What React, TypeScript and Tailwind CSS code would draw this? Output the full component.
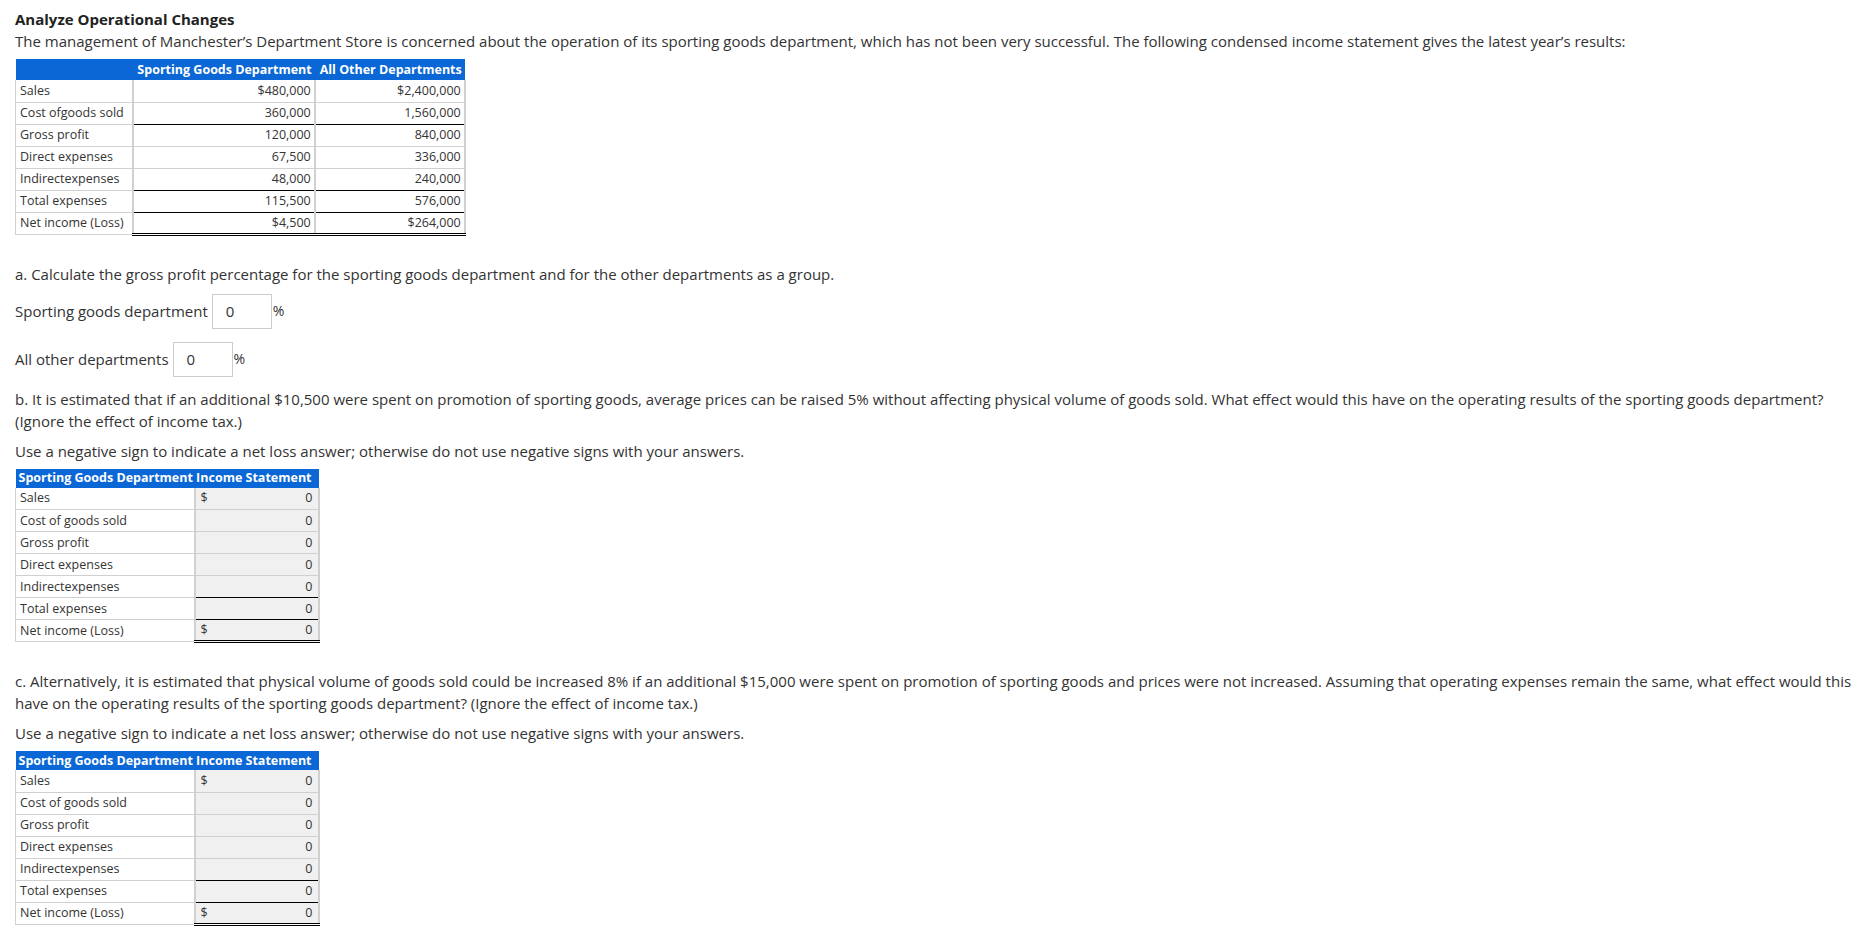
import React from "react";

// ruleBelow = black total line under the value cells of that row
const baseRows = [
  { label: "Sales", a: "$480,000", b: "$2,400,000" },
  { label: "Cost ofgoods sold", a: "360,000", b: "1,560,000", ruleBelow: true },
  { label: "Gross profit", a: "120,000", b: "840,000" },
  { label: "Direct expenses", a: "67,500", b: "336,000" },
  { label: "Indirectexpenses", a: "48,000", b: "240,000", ruleBelow: true },
  { label: "Total expenses", a: "115,500", b: "576,000", ruleBelow: true },
  { label: "Net income (Loss)", a: "$4,500", b: "$264,000", last: true },
];

const answerRows = [
  { label: "Sales", dollar: true },
  { label: "Cost of goods sold" },
  { label: "Gross profit" },
  { label: "Direct expenses" },
  { label: "Indirectexpenses", ruleBelow: true },
  { label: "Total expenses", ruleBelow: true },
  { label: "Net income (Loss)", dollar: true, last: true },
];

const labelCell =
  "h-[22px] p-0 pl-[4px] pr-2 border-l border-b border-r-2 border-[#d0d0d0] text-left align-middle whitespace-nowrap";

const valueCell = (ruleBelow?: boolean, last?: boolean) =>
  [
    "h-[22px] p-0 px-[3px] text-right align-middle whitespace-nowrap border-r-2 border-r-[#d0d0d0]",
    last
      ? "border-b-[3px] border-b-black border-double"
      : ruleBelow
        ? "border-b border-b-black"
        : "border-b border-b-[#d0d0d0]",
  ].join(" ");

const DataTable = () => (
  <table className="mt-[7px] border-collapse text-[12.5px] leading-[16px] text-[#333]">
    <thead>
      <tr className="h-[21px] bg-[#0b67d6] text-white">
        <th className="w-[113px] p-0"></th>
        <th className="w-[182px] p-0 px-[3px] text-right font-bold whitespace-nowrap">Sporting Goods Department</th>
        <th className="w-[150px] p-0 px-[3px] text-right font-bold whitespace-nowrap">All Other Departments</th>
      </tr>
    </thead>
    <tbody>
      {baseRows.map((r) => (
        <tr key={r.label}>
          <td className={labelCell}>{r.label}</td>
          <td className={valueCell(r.ruleBelow, r.last)}>{r.a}</td>
          <td className={valueCell(r.ruleBelow, r.last)}>{r.b}</td>
        </tr>
      ))}
    </tbody>
  </table>
);

const AnswerTable = () => (
  <table className="mt-[7px] border-collapse text-[12.5px] leading-[16px] text-[#333]">
    <thead>
      <tr className="h-[19px] bg-[#0b67d6] text-white">
        <th colSpan={2} className="p-0 px-[3px] text-left font-bold whitespace-nowrap">
          Sporting Goods Department Income Statement
        </th>
      </tr>
    </thead>
    <tbody>
      {answerRows.map((r) => (
        <tr key={r.label}>
          <td className={labelCell + " w-[179px]"}>{r.label}</td>
          <td className={valueCell(r.ruleBelow, r.last) + " w-[124px] bg-[#f0f0f0]"}>
            <div className="flex items-center justify-between px-[2px]">
              <span>{r.dollar ? "$" : ""}</span>
              <span>0</span>
            </div>
          </td>
        </tr>
      ))}
    </tbody>
  </table>
);

const PctInput = ({ label }: { label: string }) => (
  <div className="flex items-center">
    <span>{label}</span>
    <div className="ml-[4px] flex h-[35px] w-[60px] items-center border border-[#c9cdd2] bg-white pl-[13px]">
      0
    </div>
    <span className="ml-[1px] text-[14px]">%</span>
  </div>
);

export default function App() {
  return (
    <div
      className="min-h-screen bg-white pl-[15px] pr-[4px] pt-[8px] text-[15px] leading-[22px] text-[#333]"
      style={{ fontFamily: "'Open Sans', sans-serif" }}
    >
      <div className="text-[15px] font-bold leading-[22px] text-[#222]">Analyze Operational Changes</div>
      <p className="leading-[22px]">
        The management of Manchester’s Department Store is concerned about the operation of its sporting goods
        department, which has not been very successful. The following condensed income statement gives the latest
        year’s results:
      </p>
      <DataTable />

      <p className="mt-[27px]">
        a. Calculate the gross profit percentage for the sporting goods department and for the other departments as a
        group.
      </p>
      <div className="mt-[9px]">
        <PctInput label="Sporting goods department" />
      </div>
      <div className="mt-[13px]">
        <PctInput label="All other departments" />
      </div>

      <p className="mt-[11px]">
        b. It is estimated that if an additional $10,500 were spent on promotion of sporting goods, average prices can
        be raised 5% without affecting physical volume of goods sold. What effect would this have on the operating
        results of the sporting goods department? (Ignore the effect of income tax.)
      </p>
      <p className="mt-[8px]">Use a negative sign to indicate a net loss answer; otherwise do not use negative signs with your answers.</p>
      <AnswerTable />

      <p className="mt-[27px]">
        c. Alternatively, it is estimated that physical volume of goods sold could be increased 8% if an additional
        $15,000 were spent on promotion of sporting goods and prices were not increased. Assuming that operating
        expenses remain the same, what effect would this have on the operating results of the sporting goods
        department? (Ignore the effect of income tax.)
      </p>
      <p className="mt-[8px]">Use a negative sign to indicate a net loss answer; otherwise do not use negative signs with your answers.</p>
      <div className="pb-[6px]">
        <AnswerTable />
      </div>
    </div>
  );
}
